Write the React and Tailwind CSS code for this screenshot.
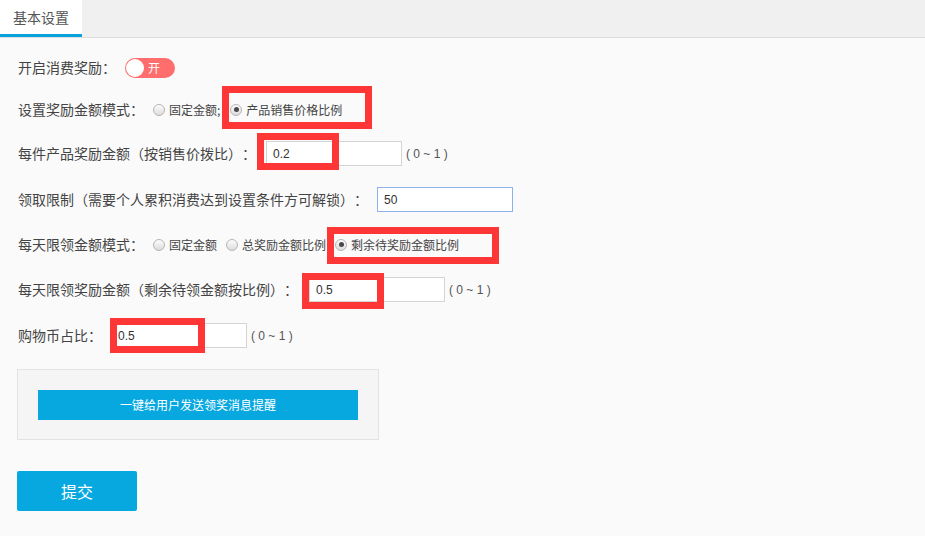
import { useState } from 'react';

const CJK = "font-['Noto_Sans_CJK_SC','Liberation_Sans',sans-serif] [text-spacing-trim:space-all]";
const LATIN = "font-['Liberation_Sans','Noto_Sans_CJK_SC',sans-serif]";

const Radio = ({ checked }) => (
  <span className="w-[12px] h-[12px] rounded-full border border-[#b5b5b5] bg-gradient-to-b from-[#fdfdfd] to-[#dcdcdc] flex items-center justify-center shrink-0">
    {checked && <span className="w-[5px] h-[5px] rounded-full bg-[#4a4a4a]" />}
  </span>
);

const Option = ({ checked, children, className = '' }) => (
  <span className={`inline-flex items-center gap-[4px] h-[25px] text-[12px] text-[#444] ${className}`}>
    <Radio checked={checked} />
    <span>{children}</span>
  </span>
);

// red annotation frame laid over an element
const Mark = ({ className }) => (
  <span className={`absolute border-[7px] border-[#fe3636] pointer-events-none ${className}`} />
);

const Field = ({ value, focused, className = '', mark }) => (
  <span className={`relative inline-flex ${className}`}>
    <input
      defaultValue={value}
      className={`${LATIN} w-[136px] h-[25px] bg-white border pl-[6px] text-[12px] text-[#333] outline-none ${focused ? 'border-[#8cb2ee]' : 'border-[#d4d4d4]'}`}
    />
    {mark && <Mark className={mark} />}
  </span>
);

const Range = () => <span className={`${LATIN} ml-[4px] text-[12px] text-[#555]`}>( 0 ~ 1 )</span>;

export default function App() {
  const [on, setOn] = useState(true);

  return (
    <div className={`w-[925px] h-[536px] bg-[#fafafa] ${CJK} text-[14px] text-[#444] overflow-hidden`}>
      <div className="h-[38px] bg-[#f0f0f0] border-b border-[#dedede] flex">
        <div className="w-[82px] h-[37px] bg-white border-b-[3px] border-[#0aa2dc] flex items-center justify-center text-[14px] text-[#555]">
          基本设置
        </div>
      </div>

      <div className="px-[18px] pt-[17px] flex flex-col">
        <div className="h-[25px] flex items-center">
          <span>开启消费奖励：</span>
          <button
            onClick={() => setOn(!on)}
            className="ml-[9px] w-[50px] h-[20px] rounded-full bg-[#ff6d6d] flex items-center px-[1px]"
          >
            <span className="w-[18px] h-[18px] rounded-full bg-white" />
            <span className="ml-[4px] text-[12px] text-white">开</span>
          </button>
        </div>

        <div className="mt-[17px] h-[25px] flex items-center">
          <span>设置奖励金额模式：</span>
          <Option className="ml-[9px]">固定金额;</Option>
          <span className="relative ml-[10px] inline-flex">
            <Option checked>产品销售价格比例</Option>
            <Mark className="left-[-8px] top-[-11px] w-[150px] h-[43px]" />
          </span>
        </div>

        <div className="mt-[19px] h-[25px] flex items-center">
          <span>每件产品奖励金额（按销售价拨比）：</span>
          <Field value="0.2" className="ml-[10px]" mark="left-[-9px] top-[-8px] w-[82px] h-[37px]" />
          <Range />
        </div>

        <div className="mt-[21px] h-[25px] flex items-center">
          <span>领取限制（需要个人累积消费达到设置条件方可解锁）：</span>
          <Field value="50" focused className="ml-[9px]" />
        </div>

        <div className="mt-[20px] h-[25px] flex items-center">
          <span>每天限领金额模式：</span>
          <Option className="ml-[9px]">固定金额</Option>
          <Option className="ml-[9px]">总奖励金额比例</Option>
          <span className="relative ml-[9px] inline-flex">
            <Option checked>剩余待奖励金额比例</Option>
            <Mark className="left-[-8px] top-[-5px] w-[172px] h-[37px]" />
          </span>
        </div>

        <div className="mt-[20px] h-[25px] flex items-center">
          <span>每天限领奖励金额（剩余待领金额按比例）：</span>
          <Field value="0.5" className="ml-[11px]" mark="left-[-7px] top-[-4px] w-[82px] h-[36px]" />
          <Range />
        </div>

        <div className="mt-[21px] h-[25px] flex items-center">
          <span>购物币占比：</span>
          <Field value="0.5" className="ml-[9px]" mark="left-[-1px] top-[-5px] w-[95px] h-[35px]" />
          <Range />
        </div>

        <div className="mt-[21px] ml-[-1px] w-[362px] h-[71px] bg-[#f5f5f5] border border-[#e3e3e3] pt-[20px] pl-[20px]">
          <button className="w-[320px] h-[30px] bg-[#07a8e0] text-white text-[12px]">一键给用户发送领奖消息提醒</button>
        </div>

        <button className="mt-[31px] ml-[-1px] w-[120px] h-[40px] rounded-[2px] bg-[#07a8e0] text-white text-[16px]">提交</button>
      </div>
    </div>
  );
}
